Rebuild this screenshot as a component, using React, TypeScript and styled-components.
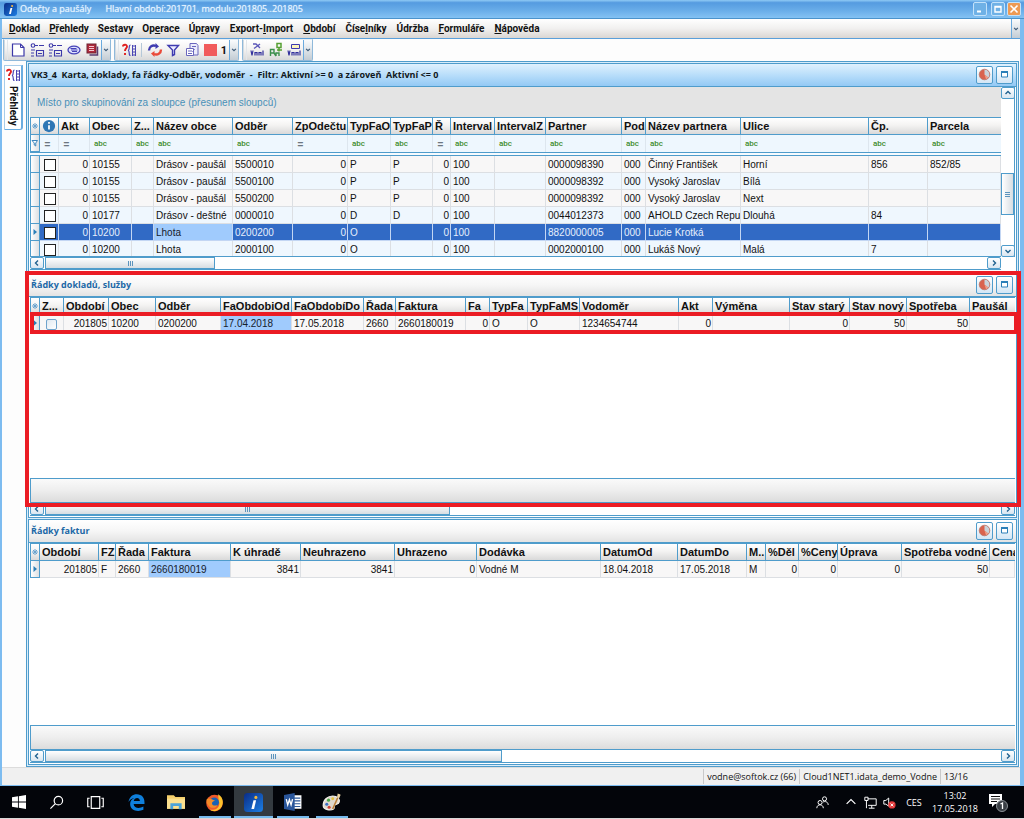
import React from "react";
import styled, { createGlobalStyle, css } from "styled-components";

const line = "#4f9ccb";
const grid = '"Liberation Sans", Arial, sans-serif';
const ui = 'Roboto, "Open Sans", sans-serif';
const caption = '"Open Sans", "Noto Sans", sans-serif';
const silver = "linear-gradient(#ffffff, #f4f3f2 45%, #d9d9d9)";
const blueBtn = "linear-gradient(#ffffff, #d3e6f5)";

const Global = createGlobalStyle`
  *, *::before, *::after { box-sizing: border-box; }
  body { margin: 0; background: #000; font-family: ${ui}; font-size: 10px; color: #111; }
  button { font: inherit; color: inherit; padding: 0; border: 0; background: none; }
  svg { display: block; flex: none; }
`;

const Shell = styled.div`
  display: flex;
  flex-direction: column;
  min-height: 100vh;
`;

/* ---------- application window ---------- */

const AppWindow = styled.main`
  flex: 1;
  display: flex;
  flex-direction: column;
  background: #fdfdfd;
  border: solid #7dbcf0;
  border-width: 0 4px 1px 2px;
`;

const TitleBar = styled.header`
  display: flex;
  align-items: center;
  gap: 3px;
  height: 19px;
  margin: 0 -4px 0 -2px;
  padding: 0 3px 0 4px;
  color: #e9f5ff;
  background: linear-gradient(#8fcaf5, #559be0 15%, #6aaee9 60%, #84c2f3);
  border-bottom: 1px solid #4b93cc;
`;

const TitleText = styled.h1`
  margin: 0;
  padding-bottom: 2px;
  font-family: ${caption};
  font-size: 9px;
  font-weight: 400;
  white-space: pre;
  text-shadow: 0 0 1px #cfe8ff;
  flex: 1;
`;

const CaptionButton = styled.button<{ $close?: boolean }>`
  display: grid;
  place-items: center;
  width: 14px;
  height: 14px;
  color: #fff;
  border: 1px solid #c3e2fa;
  border-radius: 2px;
  background: ${(p) => (p.$close ? "#ee9a54" : "#6fb1e6")};
  margin-left: ${(p) => (p.$close ? "-1px" : "1px")};
`;

const MenuBar = styled.nav`
  display: flex;
  height: 20px;
  padding-left: 2px;
  background: linear-gradient(#ffffff, #f1f0ef 50%, #dad6d3);
  border-bottom: 1px solid #5a9fda;
`;

const MenuItem = styled.button`
  padding: 0 4px 0 5px;
  font-weight: 700;
  font-size: 10px;
  &:nth-child(n + 5) {
    padding-right: 5px;
  }
`;

const Overflow = styled.button`
  display: grid;
  place-items: center;
  width: 9px;
  color: #3c5a78;
  border-left: 1px solid #6aaade;
  background: linear-gradient(#fafcfd, #c3ccd4);
`;

const Spacer = styled.div`
  flex: 1;
`;

const ToolRow = styled.div`
  display: flex;
  gap: 3px;
  height: 22px;
  padding-left: 1px;
`;

const ToolBar = styled.div`
  display: flex;
  align-items: stretch;
  padding-left: 5px;
  background: linear-gradient(90deg, #d3dbe2 0 1px, transparent 1px 3px, #e2e6ea 3px 4px, transparent 4px), ${silver};
  border: 1px solid #8fb9da;
  border-top-color: #e6eef5;
  border-radius: 0 0 2px 2px;
`;

const ToolButton = styled.button`
  display: grid;
  place-items: center;
  width: 18px;
  font-weight: 700;
  &:nth-of-type(2n) {
    width: 19px;
  }
`;

const CountButton = styled.button`
  width: 10px;
  font-weight: 700;
  font-size: 11px;
`;

const Divider = styled.i`
  width: 1px;
  margin: 3px;
  background: #b5c8d8;
`;

const Workspace = styled.div`
  flex: 1;
  display: flex;
`;

const SideRail = styled.aside`
  width: 24px;
  padding: 4px 3px 0 2px;
`;

const SideTab = styled.button`
  display: flex;
  flex-direction: column;
  align-items: center;
  gap: 3px;
  width: 19px;
  height: 65px;
  padding-top: 1px;
  background: #fff;
  border: 1px solid #a8cdea;
  border-right: 2px solid #6aade0;
  border-bottom-color: #6aade0;
  border-radius: 0 0 3px 0;
  span {
    writing-mode: vertical-rl;
    font-weight: 700;
    font-size: 10px;
    line-height: 12px;
  }
`;

const Dock = styled.div`
  flex: 1;
  min-width: 0;
  display: grid;
  grid-template-rows: auto 245px minmax(200px, 1fr);
  gap: 1px;
  padding: 1px;
  margin-right: 1px;
  background: #d9edfb;
  border: 1px solid ${line};
`;

/* ---------- panels ---------- */

const Panel = styled.section`
  position: relative;
  display: flex;
  flex-direction: column;
  min-width: 0;
  padding: 0 1px 1px;
  background: #fff;
  border: 1px solid ${line};
`;

const PanelHead = styled.header<{ $active?: boolean }>`
  display: flex;
  align-items: center;
  gap: 3px;
  height: 23px;
  margin: 0 -1px;
  padding: 0 3px 1px 2px;
  color: ${(p) => (p.$active ? "#101820" : "#1c68a6")};
  background: ${(p) => (p.$active ? "linear-gradient(#dff1fe, #b9defa 50%, #93c9f5)" : "linear-gradient(#ffffff, #f6f6f6 50%, #e3e3e3)")};
  border-bottom: 1px solid ${line};
`;

const PanelTitle = styled.h2`
  flex: 1;
  margin: 0;
  font-family: ${caption};
  font-size: 9px;
  font-weight: 700;
  white-space: pre;
`;

const PanelButton = styled.button`
  display: grid;
  place-items: center;
  width: 17px;
  height: 18px;
  border: 1px solid ${line};
  border-radius: 2px;
  background: ${blueBtn};
`;

const GroupArea = styled.div`
  height: 30px;
  padding-left: 7px;
  font: 10px/32px ${grid};
  color: #4990b8;
  background: #e4e4e4;
`;

const ScrollBody = styled.div`
  display: flex;
  flex: 1;
`;

const ScrollMain = styled.div`
  flex: 1;
  min-width: 0;
`;

const TableView = styled.div<{ $height?: number }>`
  overflow: hidden;
  ${(p) => (p.$height ? `height: ${p.$height}px;` : "flex: 1;")}
`;

const Table = styled.table`
  width: 100%;
  table-layout: fixed;
  border-spacing: 0;
  font-family: ${grid};
  font-size: 10px;
`;

const HeadCell = styled.th`
  height: 18px;
  padding: 0 0 0 2px;
  font-size: 11px;
  line-height: 16px;
  text-align: left;
  white-space: nowrap;
  overflow: hidden;
  background: ${silver};
  border: solid ${line};
  border-width: 1px 1px 1px 0;
  &:first-child {
    padding: 0;
    border-left-width: 1px;
  }
  &:last-child {
    border-right-width: 0;
  }
`;

const cellBox = css`
  height: 17px;
  line-height: 14px;
  white-space: nowrap;
  overflow: hidden;
`;

const RowMark = styled.td`
  ${cellBox}
  padding: 0;
  background: linear-gradient(90deg, #ffffff, #dcdfe2);
  border: solid ${line};
  border-width: 0 1px 1px;
`;

const FilterCell = styled.td<{ $equal?: boolean }>`
  ${cellBox}
  padding: 1px 0 0 4px;
  font-family: ${ui};
  font-weight: 500;
  font-size: ${(p) => (p.$equal ? 12 : 8)}px;
  color: ${(p) => (p.$equal ? "#6c7680" : "#3c8a2a")};
  background: #eef7fe;
  border-right: 1px solid #dde6ee;
  &:last-child {
    border-right: 0;
  }
`;

const Gap = styled.td`
  height: 4px;
  padding: 0;
  background: #f6fbff;
  border: solid ${line};
  border-width: 1px 0;
`;

const Cell = styled.td<{ $right?: boolean; $focus?: boolean }>`
  ${cellBox}
  padding: 2px 1px 0 2px;
  text-align: ${(p) => (p.$right ? "right" : "left")};
  border: solid #dcdfe3;
  border-width: 0 1px 1px 0;
  ${(p) =>
    p.$focus &&
    css`
      &&& {
        color: #16202c;
        background: #a0cbfd;
      }
    `}
`;

const Row = styled.tr<{ $selected?: boolean }>`
  background: #f8f7f7;
  &:nth-child(even) {
    background: #eff7fe;
  }
  ${(p) =>
    p.$selected &&
    css`
      && {
        background: #316ac5;
      }
      ${Cell} {
        color: #e6effc;
        border-right-color: #c3d6f3;
        border-bottom-color: #c3d6f3;
      }
    `}
`;

const Check = styled.input<{ $soft?: boolean }>`
  appearance: none;
  display: block;
  width: ${(p) => (p.$soft ? 11 : 12)}px;
  height: ${(p) => (p.$soft ? 11 : 12)}px;
  margin: 0 0 0 ${(p) => (p.$soft ? 4 : 2)}px;
  background: ${(p) => (p.$soft ? "linear-gradient(135deg, #dfe9f1, #ffffff)" : "#fff")};
  border: 1px solid ${(p) => (p.$soft ? "#6ea3cc" : "#222")};
  border-radius: ${(p) => (p.$soft ? 2 : 0)}px;
`;

const Summary = styled.div`
  height: 24px;
  background: linear-gradient(#fafafa, #eeeeee 50%, #dcdcdc);
  border: solid ${line};
  border-width: 1px 0 0 1px;
`;

const Bar = styled.div<{ $vertical?: boolean }>`
  display: flex;
  flex-direction: ${(p) => (p.$vertical ? "column" : "row")};
  ${(p) => (p.$vertical ? "width: 14px; height: 170px;" : "height: 14px;")}
  background: #fff;
  border: solid ${line};
  border-width: ${(p) => (p.$vertical ? "0 1px 0 0" : "1px 0")};
`;

const Arrow = styled.button`
  display: grid;
  place-items: center;
  width: 14px;
  height: 12px;
  flex: none;
  color: #20618f;
  border: 1px solid ${line};
  border-radius: 2px;
  background: linear-gradient(#ffffff, #d9e6f0);
`;

const Thumb = styled.div<{ $size: number; $before?: number; $vertical?: boolean }>`
  display: grid;
  place-items: center;
  flex: none;
  color: #5c94bd;
  border: 1px solid ${line};
  background: linear-gradient(${(p) => (p.$vertical ? "90deg, " : "")}#ffffff, #d7dde2);
  ${(p) =>
    p.$vertical ? `height: ${p.$size}px; margin-top: ${p.$before}px;` : `width: ${p.$size}px; margin-left: 1px;`}
`;

const OuterMark = styled.div`
  position: absolute;
  z-index: 1;
  inset: -3px -5px 10px -4px;
  border: 4px solid #eb1c24;
  pointer-events: none;
`;

const RowMarkFrame = styled.div`
  position: absolute;
  z-index: 2;
  top: 38px;
  right: -2px;
  left: 1px;
  height: 22px;
  border: 4px solid #eb1c24;
  pointer-events: none;
`;

/* ---------- status bar and taskbar ---------- */

const StatusBar = styled.footer`
  display: flex;
  justify-content: flex-end;
  height: 18px;
  padding: 1px 0;
  font-family: ${caption};
  font-size: 9px;
  background: #f0f0f0;
  border-top: 1px solid #dcdcdc;
`;

const StatusItem = styled.span<{ $grow?: boolean }>`
  padding: 0 3px;
  line-height: 16px;
  border-left: 1px solid #c9c9c9;
  ${(p) => p.$grow && "width: 80px;"}
`;

const TaskBar = styled.footer`
  display: flex;
  height: 33px;
  padding-right: 8px;
  font-family: ${caption};
  font-size: 9px;
  color: #fff;
  background: #03050a;
  border-bottom: 1px solid #d8d8d8;
`;

const TaskButton = styled.button<{ $running?: boolean; $active?: boolean; $first?: boolean }>`
  display: grid;
  place-items: center;
  width: ${(p) => (p.$first ? 37 : 39)}px;
  background: ${(p) => (p.$active ? "#333a40" : "none")};
  ${(p) =>
    p.$running &&
    css`
      background-image: linear-gradient(#76b9ed, #76b9ed);
      background-repeat: no-repeat;
      background-position: bottom;
      background-size: ${p.$active ? 39 : 32}px 2px;
    `}
`;

const Apps = styled.div`
  display: flex;
  margin-left: 2px;
`;

const TrayButton = styled.button<{ $w: number }>`
  display: grid;
  place-items: center;
  width: ${(p) => p.$w}px;
`;

const Clock = styled.time`
  width: 50px;
  padding-top: 3px;
  line-height: 13px;
  text-align: center;
`;

/* ---------- icons ---------- */

const Svg = (p: { w?: number; h?: number; vb?: string; children: React.ReactNode }) => (
  <svg width={p.w ?? 16} height={p.h ?? p.w ?? 16} viewBox={p.vb ?? "0 0 16 16"} fill="none" aria-hidden="true">
    {p.children}
  </svg>
);

const Chevron = ({ dir }: { dir: "up" | "down" | "left" | "right" }) => {
  const d = { up: "M1.5 5 4 2.5 6.5 5", down: "M1.5 3 4 5.500 6.500 3", left: "M5 1.500 2.500 4 5 6.500", right: "M3 1.500 5.500 4 3 6.500" }[dir];
  return (
    <Svg w={8} vb="0 0 8 8">
      <path d={d} stroke="currentColor" strokeWidth="1.4" />
    </Svg>
  );
};

const SmallChevron = () => (
  <Svg w={6} vb="0 0 8 8">
    <path d="M1.500 2.500 4 5 6.500 2.500" stroke="currentColor" strokeWidth="1.5" />
  </Svg>
);

const InfoApp = ({ size }: { size: number }) => (
  <Svg w={size}>
    <defs>
      <linearGradient id={`app${size}`} x1="0" y1="0" x2="1" y2="1">
        <stop stopColor="#0a2c86" />
        <stop offset="1" stopColor="#1c7fe4" />
      </linearGradient>
    </defs>
    <rect width="16" height="16" rx="3" fill={`url(#app${size})`} />
    <path d="M8 6h2.200L8.500 13.500H6.200z" fill="#fff" />
    <circle cx="10" cy="3.700" r="1.300" fill="#f4b73b" />
  </Svg>
);

const QueryIcon = () => (
  <Svg>
    <path d="M2 4.500C2 2.200 6 2 6 4.500 6 6.500 4 6.500 4 9M4 11v2" stroke="#e02020" strokeWidth="1.900" />
    <path d="M9.500 3C7 3 9.500 8 7 8.500 9.500 9 7 13.500 9.500 13.500" stroke="#4b45b4" strokeWidth="1.200" />
    <path d="M11 4h4M11 7h4M11 10h4M11 13h4M11.500 3v11M14.500 3v11" stroke="#4b45b4" />
  </Svg>
);

const NewIcon = () => (
  <Svg>
    <path d="M2.500 2h8l3.500 3.500V14h-11.500z" fill="#fff" stroke="#3b37a8" strokeWidth="1.200" />
    <path d="M10.500 2v3.500H14" stroke="#3b37a8" />
  </Svg>
);

const FormIcon = () => (
  <Svg>
    <circle cx="4" cy="3.500" r="1.800" stroke="#3d39aa" strokeWidth="1.100" />
    <path d="M6 3.500h3M10 3.500h5M2 8h4M2 11h3M7.500 8.500h7v5.500h-7zM9 11.500h4M2 14h3" stroke="#3d39aa" strokeWidth="1.100" />
  </Svg>
);

const PrintIcon = () => (
  <Svg>
    <ellipse cx="8" cy="8" rx="6" ry="3.800" fill="#dfe2ff" stroke="#4541b8" strokeWidth="1.300" />
    <path d="M4.500 6.500h6M6 9.500h5M5 8h6.500" stroke="#4541b8" />
  </Svg>
);

const StackIcon = () => (
  <Svg>
    <rect x="3" y="2" width="9" height="9" fill="#b02a3c" stroke="#6e2433" />
    <path d="M5 4.500h5M5 6.500h5M5 8.500h5" stroke="#f3c9cf" />
    <path d="M13.500 4.500v8.500h-8" stroke="#5b3c70" strokeWidth="1.500" />
  </Svg>
);

const RefreshIcon = () => (
  <Svg>
    <path d="M2 8.500C2 4.500 5.500 2.500 9 4" stroke="#3f3bb0" strokeWidth="2.400" />
    <path d="M8.500 1v6L12 4.500z" fill="#3f3bb0" />
    <path d="M14 7.500c0 4-3.500 6-7 4.500" stroke="#ea4a38" strokeWidth="2.400" />
    <path d="M7.500 15V9L4 11.500z" fill="#ea4a38" />
  </Svg>
);

const FunnelIcon = () => (
  <Svg>
    <path d="M3 3.500h10.500L9.500 8v4.500l-2 1V8z" fill="#eef" stroke="#3f3bb0" strokeWidth="1.400" />
  </Svg>
);

const CopyIcon = () => (
  <Svg>
    <path d="M6 1.500h6.500l1.500 2V13H6z" fill="#ececfb" stroke="#6a66bd" />
    <path d="M2.500 6.500h7v7h-7z" fill="#fff" stroke="#6a66bd" />
    <path d="M8 4.500h4M4 9h4M4 11.500h4M10.500 7l-2 3" stroke="#6a66bd" />
  </Svg>
);

const ExportIcon = ({ kind }: { kind: number }) => (
  <Svg>
    {kind === 0 && <path d="M4 2h3l4 4M11 2 5 6.500" stroke="#5b57b8" strokeWidth="1.300" />}
    {kind === 1 && <path d="M9 1.500h4v4H9zM11 5.500v4M9 8h5" stroke="#55a032" strokeWidth="1.500" />}
    {kind === 2 && <path d="M5.500 2.500h8v4h-8z" fill="#fdf4bd" stroke="#3f3bb0" />}
    {kind === 1 ? (
      <path d="M2.500 14V7.500H6V11H2.500M8 14v-3h3v3M6 11l2 3" stroke="#3c8f4c" strokeWidth="1.400" />
    ) : (
      <path d="M2 8.500l1 5 1-5M6 13.500v-3h2v3M10 13.500v-3h2v3M14 8.500v5" stroke="#322f9c" strokeWidth="1.200" />
    )}
  </Svg>
);

const PieIcon = () => (
  <Svg w={13}>
    <circle cx="8" cy="8" r="6.500" fill="#d9634e" />
    <path d="M8 8V1.500a6.500 6.500 0 0 1 5 10.600z" fill="#c9d3da" />
    <path d="M8 8 13 12a6.500 6.500 0 0 1-3 2z" fill="#efa18a" />
    <circle cx="8" cy="8" r="6.500" stroke="#b9786c" />
  </Svg>
);

const MaxIcon = () => (
  <Svg w={9} vb="0 0 9 9">
    <path d="M1.500 1.500h6v5.500h-6z" fill="#fff" stroke="#2b7fb8" />
    <path d="M1 2h7" stroke="#2b7fb8" strokeWidth="2" />
  </Svg>
);

const Star = () => (
  <Svg w={8} vb="0 0 8 8">
    <path d="M4 1v6M1 4h6M2 2l4 4M6 2 2 6" stroke="#69a3cf" />
  </Svg>
);

const InfoDot = () => (
  <Svg w={14}>
    <circle cx="8" cy="8" r="7" fill="#2f77b5" />
    <path d="M8 7v5M8 3.500v2" stroke="#fff" strokeWidth="2" />
  </Svg>
);

const RowArrow = () => (
  <Svg w={8} vb="0 0 8 8">
    <path d="M2.500 1 6 4 2.500 7z" fill="#2b7fb8" />
  </Svg>
);

const Grip = ({ v }: { v?: boolean }) => (
  <Svg w={5} vb="0 0 5 5">
    <path d={v ? "M0 .5h5M0 2.500h5M0 4.500h5" : "M.5 0v5M2.500 0v5M4.500 0v5"} stroke="currentColor" />
  </Svg>
);

/* ---------- data grid ---------- */

type Column = { label: React.ReactNode; w?: number; right?: boolean; filter?: "abc" | "=" };
type RowData = { cells: React.ReactNode[]; selected?: boolean };

const col = (label: React.ReactNode, w?: number, right?: boolean, filter?: "abc" | "="): Column => ({ label, w, right, filter });

const DataGrid = (p: { columns: Column[]; rows: RowData[]; current: number; focus: number; filter?: boolean }) => (
  <Table>
    <colgroup>
      <col width={10} />
      {p.columns.map((c, i) => (
        <col key={i} width={c.w} />
      ))}
    </colgroup>
    <thead>
      <tr>
        <HeadCell scope="col">
          <Star />
        </HeadCell>
        {p.columns.map((c, i) => (
          <HeadCell scope="col" key={i}>
            {c.label}
          </HeadCell>
        ))}
      </tr>
      {p.filter && (
        <tr>
          <RowMark>
            <Svg w={8}>
              <path d="M2 3h11L9.500 8v6l-3-2V8z" fill="#fff" stroke="#3d86bd" strokeWidth="2" />
            </Svg>
          </RowMark>
          {p.columns.map((c, i) => (
            <FilterCell key={i} $equal={c.filter === "="}>
              {c.filter}
            </FilterCell>
          ))}
        </tr>
      )}
      {p.filter && (
        <tr>
          <Gap colSpan={p.columns.length + 1} />
        </tr>
      )}
    </thead>
    <tbody>
      {p.rows.map((r, i) => (
        <Row key={i} $selected={r.selected}>
          <RowMark>{i === p.current && <RowArrow />}</RowMark>
          {r.cells.map((c, j) => (
            <Cell key={j} $right={p.columns[j].right} $focus={i === p.current && j === p.focus}>
              {c}
            </Cell>
          ))}
        </Row>
      ))}
    </tbody>
  </Table>
);

const HScroll = ({ size }: { size: number }) => (
  <Bar>
    <Arrow aria-label="Posunout vlevo">
      <Chevron dir="left" />
    </Arrow>
    <Thumb $size={size}>
      <Grip />
    </Thumb>
    <Spacer />
    <Arrow aria-label="Posunout vpravo">
      <Chevron dir="right" />
    </Arrow>
  </Bar>
);

const Head = ({ title, active }: { title: string; active?: boolean }) => (
  <PanelHead $active={active}>
    <PanelTitle>{title}</PanelTitle>
    <PanelButton aria-label="Graf">
      <PieIcon />
    </PanelButton>
    <PanelButton aria-label="Maximalizovat panel">
      <MaxIcon />
    </PanelButton>
  </PanelHead>
);

const cardColumns = [
  col(<InfoDot />, 19, false, "="),
  col("Akt", 31, true, "="),
  col("Obec", 42, false, "abc"),
  col("Z...", 22, false, "abc"),
  col("Název obce", 79, false, "abc"),
  col("Odběr", 60, false, "abc"),
  col("ZpOdečtu", 55, true, "="),
  col("TypFaO", 43, false, "abc"),
  col("TypFaP", 42, false, "abc"),
  col("Ř", 18, true, "="),
  col("Interval", 44, false, "abc"),
  col("IntervalZ", 51, false, "abc"),
  col("Partner", 76, false, "abc"),
  col("Pod", 24, false, "abc"),
  col("Název partnera", 95, false, "abc"),
  col("Ulice", 128, false, "abc"),
  col("Čp.", 59, false, "abc"),
  col("Parcela", undefined, false, "abc"),
];

const cards = [
  ["10155", "Drásov - paušál", "5500010", "P", "P", "0000098390", "Činný František", "Horní", "856", "852/85"],
  ["10155", "Drásov - paušál", "5500100", "P", "P", "0000098392", "Vysoký Jaroslav", "Bílá", "", ""],
  ["10155", "Drásov - paušál", "5500200", "P", "P", "0000098392", "Vysoký Jaroslav", "Next", "", ""],
  ["10177", "Drásov - deštné", "0000010", "D", "D", "0044012373", "AHOLD Czech Repu", "Dlouhá", "84", ""],
  ["10200", "Lhota", "0200200", "O", "", "8820000005", "Lucie Krotká", "", "", ""],
  ["10200", "Lhota", "2000100", "O", "", "0002000100", "Lukáš Nový", "Malá", "7", ""],
];

const cardRows: RowData[] = cards.map(([obec, nazev, odber, fo, fp, partner, jmeno, ulice, cp, parcela], i) => ({
  selected: i === 4,
  cells: [
    <Check type="checkbox" aria-label={`Označit ${odber}`} />,
    "0", obec, "", nazev, odber, "0", fo, fp, "0", "100", "", partner, "000", jmeno, ulice, cp, parcela,
  ],
}));

const docColumns = [
  col("Z...", 24), col("Období", 45, true), col("Obec", 47), col("Odběr", 65), col("FaObdobiOd", 71), col("FaObdobíDo", 72),
  col("Řada", 32), col("Faktura", 70), col("Fa", 24, true), col("TypFa", 38), col("TypFaMS", 52), col("Vodoměr", 99),
  col("Akt", 34, true), col("Výměna", 77), col("Stav starý", 60, true), col("Stav nový", 57, true), col("Spotřeba", 63, true), col("Paušál"),
];

const docRows: RowData[] = [
  {
    cells: [
      <Check type="checkbox" $soft aria-label="Označit řádek" />,
      "201805", "10200", "0200200", "17.04.2018", "17.05.2018", "2660", "2660180019", "0", "O", "O", "1234654744", "0", "", "0", "50", "50", "",
    ],
  },
];

const invoiceColumns = [
  col("Období", 59, true), col("FZ", 17), col("Řada", 33), col("Faktura", 82), col("K úhradě", 70, true), col("Neuhrazeno", 94, true),
  col("Uhrazeno", 82, true), col("Dodávka", 124), col("DatumOd", 77), col("DatumDo", 69), col("M..", 19), col("%Děl", 33, true),
  col("%Ceny", 39, true), col("Úprava", 64, true), col("Spotřeba vodné", 88, true), col("Cena"),
];

const invoiceRows: RowData[] = [
  { cells: ["201805", "F", "2660", "2660180019", "3841", "3841", "0", "Vodné M", "18.04.2018", "17.05.2018", "M", "0", "0", "0", "50", ""] },
];

/* Each entry is [before, access key, after]. */
const menus = [
  ["", "D", "oklad"], ["", "P", "řehledy"], ["Sestavy", "", ""], ["Op", "e", "race"], ["Úp", "r", "avy"], ["Export-", "I", "mport"],
  ["", "O", "bdobí"], ["Číse", "l", "níky"], ["Údržba", "", ""], ["", "F", "ormuláře"], ["", "N", "ápověda"],
];

export default function App() {
  return (
    <Shell>
      <Global />
      <AppWindow>
        <TitleBar>
          <InfoApp size={13} />
          <TitleText>{"Odečty a paušály      Hlavní období:201701, modulu:201805..201805"}</TitleText>
          <CaptionButton aria-label="Minimalizovat">
            <Svg w={10} vb="0 0 10 10"><path d="M2 7.500h4" stroke="currentColor" strokeWidth="2" /></Svg>
          </CaptionButton>
          <CaptionButton aria-label="Maximalizovat">
            <Svg w={10} vb="0 0 10 10"><path d="M2 2.500h6v5.500H2zM2 3h6" stroke="currentColor" strokeWidth="1.400" /></Svg>
          </CaptionButton>
          <CaptionButton aria-label="Zavřít" $close>
            <Svg w={10} vb="0 0 10 10"><path d="m1.500 1.500 7 7M8.500 1.500l-7 7" stroke="currentColor" strokeWidth="1.600" /></Svg>
          </CaptionButton>
        </TitleBar>
        <MenuBar>
          {menus.map(([a, key, b]) => (
            <MenuItem key={a + key + b}>{a}{key && <u>{key}</u>}{b}</MenuItem>
          ))}
          <Spacer />
          <Overflow aria-label="Další nabídky"><SmallChevron /></Overflow>
        </MenuBar>
        <ToolRow>
          <ToolBar>
            <ToolButton aria-label="Nový"><NewIcon /></ToolButton>
            <ToolButton aria-label="Formulář"><FormIcon /></ToolButton>
            <ToolButton aria-label="Seznam"><FormIcon /></ToolButton>
            <ToolButton aria-label="Náhled"><PrintIcon /></ToolButton>
            <ToolButton aria-label="Sestava"><StackIcon /></ToolButton>
            <Overflow aria-label="Další nástroje"><SmallChevron /></Overflow>
          </ToolBar>
          <ToolBar>
            <ToolButton aria-label="Přehledy"><QueryIcon /></ToolButton>
            <Divider />
            <ToolButton aria-label="Obnovit"><RefreshIcon /></ToolButton>
            <ToolButton aria-label="Filtr"><FunnelIcon /></ToolButton>
            <ToolButton aria-label="Kopírovat"><CopyIcon /></ToolButton>
            <ToolButton aria-label="Barva"><Svg><rect x="2" y="2" width="13" height="12" fill="#f15b5b" /></Svg></ToolButton>
            <CountButton>1</CountButton>
            <Overflow aria-label="Další nástroje"><SmallChevron /></Overflow>
          </ToolBar>
          <ToolBar>
            <ToolButton aria-label="Vodné"><ExportIcon kind={0} /></ToolButton>
            <ToolButton aria-label="Paušály"><ExportIcon kind={1} /></ToolButton>
            <ToolButton aria-label="Import"><ExportIcon kind={2} /></ToolButton>
            <Overflow aria-label="Další nástroje"><SmallChevron /></Overflow>
          </ToolBar>
        </ToolRow>
        <Workspace>
          <SideRail>
            <SideTab>
              <QueryIcon />
              <span>Přehledy</span>
            </SideTab>
          </SideRail>
          <Dock>
            <Panel>
              <Head active title="VK3_4  Karta, doklady, fa řádky-Odběr, vodoměr  -  Filtr: Aktivní >= 0  a zároveň  Aktivní <= 0" />
              <ScrollBody>
                <ScrollMain>
                  <GroupArea>Místo pro skupinování za sloupce (přesunem sloupců)</GroupArea>
                  <TableView $height={139}>
                    <DataGrid columns={cardColumns} rows={cardRows} current={4} focus={4} filter />
                  </TableView>
                  <HScroll size={170} />
                </ScrollMain>
                <Bar $vertical>
                  <Arrow aria-label="Posunout nahoru"><Chevron dir="up" /></Arrow>
                  <Thumb $vertical $size={42} $before={74}><Grip v /></Thumb>
                  <Spacer />
                  <Arrow aria-label="Posunout dolů"><Chevron dir="down" /></Arrow>
                </Bar>
              </ScrollBody>
            </Panel>
            <Panel>
              <Head title="Řádky dokladů, služby" />
              <TableView>
                <DataGrid columns={docColumns} rows={docRows} current={0} focus={4} />
              </TableView>
              <Summary />
              <HScroll size={405} />
              <OuterMark />
              <RowMarkFrame />
            </Panel>
            <Panel>
              <Head title="Řádky faktur" />
              <TableView>
                <DataGrid columns={invoiceColumns} rows={invoiceRows} current={0} focus={3} />
              </TableView>
              <Summary />
              <HScroll size={457} />
            </Panel>
          </Dock>
        </Workspace>
        <StatusBar>
          <StatusItem>vodne@softok.cz (66)</StatusItem>
          <StatusItem>Cloud1NET1.idata_demo_Vodne</StatusItem>
          <StatusItem $grow>13/16</StatusItem>
        </StatusBar>
      </AppWindow>
      <TaskBar>
        <TaskButton $first aria-label="Start">
          <Svg w={14}><path d="M0 2.500 6.800 1.500v6H0zM7.800 1.300 16 0v7.500H7.800zM0 8.500h6.800v6L0 13.500zM7.800 8.500H16V16l-8.200-1.300z" fill="#fff" /></Svg>
        </TaskButton>
        <TaskButton aria-label="Hledat">
          <Svg w={15}><circle cx="10" cy="6" r="4.500" stroke="#fff" strokeWidth="1.300" /><path d="M6.800 9.200 1.500 14.500" stroke="#fff" strokeWidth="1.300" /></Svg>
        </TaskButton>
        <TaskButton aria-label="Zobrazení úkolů">
          <Svg w={17}><path d="M4 2.500h8v11H4zM2.500 4H.7v8h1.800M13.500 4h1.800v8h-1.800" stroke="#fff" strokeWidth="1.100" /></Svg>
        </TaskButton>
        <Apps>
          <TaskButton aria-label="Edge">
            <Svg w={17}><path d="M.5 7.500C1.500 2.500 4.500.3 8.300.3c4.700 0 7.200 3.400 7.200 7.400v1.600H5.300c.2 4.300 5.700 4.700 9.200 2.500v3.100C9 17.400 2 15.500 2 9.500 2 6.700 3.500 4.800 6 3.800 3.500 4 1.700 5.500.5 7.500zM5.400 6.700h5.800c0-4-5.200-3.800-5.800 0z" fill="#0f7fdb" /></Svg>
          </TaskButton>
          <TaskButton aria-label="Průzkumník souborů">
            <Svg w={18}><path d="M0 2h6l1.500 1.500H16V14H0z" fill="#f4cf6c" /><path d="M0 5h16v9H0z" fill="#fbe08f" /><path d="M3 14.500V9h10v5.500h-2.500v-3h-5v3z" fill="#4ba3d9" /></Svg>
          </TaskButton>
          <TaskButton aria-label="Firefox" $running>
            <Svg w={19}><circle cx="8" cy="8.500" r="7" fill="#f0592a" /><path d="M11 1c4 2 5 7 3 10.500A7 7 0 0 1 4 14c6 1 9.500-3 7.500-8z" fill="#fdc22d" /><circle cx="7.800" cy="7.800" r="4" fill="#1a62b5" /><path d="M1.500 5c3-1 4 .5 7 1.500-2 .5-3 1.500-2.500 3 1 1.500 3 1 4.500.5-1 3-6 3.500-8 0C1.300 8.500 1 7 1.500 5z" fill="#f58b27" /></Svg>
          </TaskButton>
          <TaskButton aria-label="Odečty a paušály" $running $active><InfoApp size={19} /></TaskButton>
          <TaskButton aria-label="Word" $running>
            <Svg w={18}><path d="M8 2h7.500v12H8z" fill="#fff" /><path d="M9 4.500h5.500M9 7h5.500M9 9.500h5.500M9 12h5.500" stroke="#2b5797" /><path d="M0 1.700 9.500 0v16L0 14.300z" fill="#2a569b" /><path d="m2 5.500 1.300 5L4.800 6l1.500 4.500 1.300-5" stroke="#fff" strokeWidth="1.200" /></Svg>
          </TaskButton>
          <TaskButton aria-label="Malování" $running>
            <Svg w={19}><path d="M1 10.500C1 5.500 5 2.500 9 2.500c4 0 6 2.500 5.500 5-.5 2.500-3 1.500-4 3-.8 1.500.5 2-.8 3C7.500 15 1 14.500 1 10.500z" fill="#ded7cb" stroke="#f4f1ea" /><circle cx="4" cy="9.500" r="1.300" fill="#3c6fc4" /><circle cx="5.500" cy="6" r="1.300" fill="#4ba84a" /><circle cx="9" cy="4.800" r="1.200" fill="#e6c23a" /><circle cx="6" cy="12" r="1.300" fill="#cf4035" /><path d="M14.500 1 9 13.500" stroke="#b77b35" strokeWidth="1.300" /><path d="m13.200.5 2.500 1-1.200 3-1.800-.8z" fill="#e9d3a6" /></Svg>
          </TaskButton>
        </Apps>
        <Spacer />
        <TrayButton $w={40} aria-label="Lidé">
          <Svg w={13}><circle cx="10.500" cy="3.500" r="2.500" stroke="#fff" strokeWidth="1.200" /><circle cx="5" cy="8" r="2.500" stroke="#fff" strokeWidth="1.200" /><path d="M1 15c0-5.500 8-5.500 8 0M8.500 7.500C11 6 15 7 15 11" stroke="#fff" strokeWidth="1.200" /></Svg>
        </TrayButton>
        <TrayButton $w={18} aria-label="Skryté ikony">
          <Svg w={10}><path d="m1 11 7-7 7 7" stroke="#fff" strokeWidth="1.900" /></Svg>
        </TrayButton>
        <TrayButton $w={20} aria-label="Síť">
          <Svg w={13}><path d="M4.500 3.500H15v8H5M9.500 11.500V15M6 15h7M1 1.500h4v4H1zM3 5.500V15" stroke="#fff" strokeWidth="1.200" /></Svg>
        </TrayButton>
        <TrayButton $w={18} aria-label="Hlasitost">
          <Svg w={13}><path d="M1 5.500h2.500L7 2.500v10L3.500 10H1z" stroke="#fff" strokeWidth="1.200" /><circle cx="11" cy="11" r="4.500" fill="#e33b3b" /><path d="m9.300 9.300 3.400 3.400M12.700 9.300l-3.400 3.400" stroke="#fff" strokeWidth="1.200" /></Svg>
        </TrayButton>
        <TrayButton $w={32}>CES</TrayButton>
        <Clock>13:02<br />17.05.2018</Clock>
        <TrayButton $w={36} aria-label="Centrum akcí">
          <Svg w={20} vb="0 0 20 20"><path d="M1 2h13v10H7l-3 3v-3H1z" fill="#fff" /><path d="M3 4.500h9M3 7h9M3 9.500h6" stroke="#111" /><circle cx="14" cy="14" r="5.500" fill="#3a3f45" stroke="#8a8f94" /><path d="m12.500 12 2-1v6" stroke="#fff" strokeWidth="1.300" /></Svg>
        </TrayButton>
      </TaskBar>
    </Shell>
  );
}
